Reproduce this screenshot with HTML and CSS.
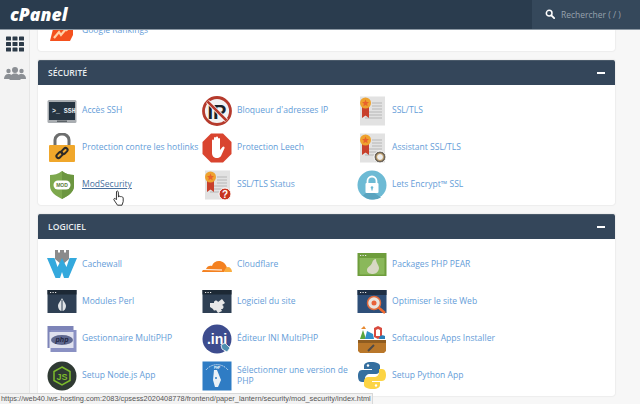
FILE: index.html
```html
<!DOCTYPE html>
<html lang="fr">
<head>
<meta charset="utf-8">
<title>cPanel</title>
<link rel="stylesheet" href="styles.css">
</head>
<body>
<header class="topbar">
  <span class="logo">cPanel</span>
  <div class="search">
    <svg class="search-icon" viewBox="0 0 12 12"><circle cx="5" cy="5" r="3.4" fill="none" stroke="#fff" stroke-width="1.8"/><path d="M7.6 7.6 11 11" stroke="#fff" stroke-width="2.2" stroke-linecap="round"/></svg>
    <span>Rechercher ( / )</span>
  </div>
</header>
<div class="shell">
  <nav class="side">
    <svg class="side-grid" viewBox="0 0 18 15"><g fill="#2c3a48"><rect width="5" height="4" rx=".6"/><rect x="6.500" width="5" height="4" rx=".6"/><rect x="13" width="5" height="4" rx=".6"/><rect y="5.500" width="5" height="4" rx=".6"/><rect x="6.500" y="5.500" width="5" height="4" rx=".6"/><rect x="13" y="5.500" width="5" height="4" rx=".6"/><rect y="11" width="5" height="4" rx=".6"/><rect x="6.500" y="11" width="5" height="4" rx=".6"/><rect x="13" y="11" width="5" height="4" rx=".6"/></g></svg>
    <svg class="side-users" viewBox="0 0 22 13"><g fill="#8b8f94"><circle cx="4.500" cy="4" r="2.200"/><circle cx="17.500" cy="4" r="2.200"/><path d="M0 12c0-3 1.500-5 4.500-5s4 2 4 5z"/><path d="M13.500 12c0-3 1-5 4-5s4.500 2 4.500 5z"/><circle cx="11" cy="3" r="3"/><path d="M5.500 13c0-4 2-6.500 5.500-6.500s5.500 2.500 5.500 6.500z"/></g></svg>
  </nav>
  <main class="main">
    <section class="panel panel-clipped">
      <div class="item item-clipped">
        <svg class="icon" viewBox="0 0 30 30"><path d="M7 10h19v10l-3 6H3z" fill="#f4511e"/><path d="M7 23l5-6 2 3 5-6 1 2" fill="none" stroke="#ffd2a8" stroke-width="2.200"/></svg>
        <a class="label">Google Rankings</a>
      </div>
    </section>

    <section class="panel">
      <h2 class="panel-head"><span>SÉCURITÉ</span><i class="minus"></i></h2>
      <div class="grid">
        <div class="item">
          <svg class="icon" viewBox="0 0 30 30"><rect x="0.500" y="4" width="29" height="23" rx="1.500" fill="#a9adb1"/><rect x="2" y="6" width="26" height="18" fill="#263441"/><rect x="10" y="24.500" width="10" height="1.500" fill="#5c6368"/><text x="5" y="17" class="svg-ssh">&gt;_ SSH</text></svg>
          <a class="label">Accès SSH</a>
        </div>
        <div class="item">
          <svg class="icon" viewBox="0 0 30 30"><circle cx="15" cy="15" r="13.500" fill="#f2f2f2" stroke="#b53a2c" stroke-width="2.800"/><text x="15" y="22.500" text-anchor="middle" class="svg-ip">IP</text><path d="M5.500 5.500 24.500 24.500" stroke="#fff" stroke-width="4"/><path d="M5.500 5.500 24.500 24.500" stroke="#b53a2c" stroke-width="2.500"/></svg>
          <a class="label">Bloqueur d'adresses IP</a>
        </div>
        <div class="item">
          <svg class="icon" viewBox="0 0 30 30"><use href="#cert"/></svg>
          <a class="label">SSL/TLS</a>
        </div>
        <div class="item">
          <svg class="icon" viewBox="0 0 30 30"><path d="M8 14V7a7 6 0 0 1 14 0v7" fill="none" stroke="#6d6e6e" stroke-width="3"/><rect x="2" y="12" width="26" height="17" rx="1" fill="#f0a72b"/><g fill="none" stroke="#2d2a26" stroke-width="2"><rect x="9" y="20" width="7" height="4" rx="2" transform="rotate(-45 12.500 22)"/><rect x="14" y="16" width="7" height="4" rx="2" transform="rotate(-45 17.500 18)"/></g></svg>
          <a class="label">Protection contre les hotlinks</a>
        </div>
        <div class="item">
          <svg class="icon" viewBox="0 0 30 30"><path d="M9 .5h12l8.500 8.500v12l-8.500 8.500H9L.5 21V9z" fill="#d9442f"/><path d="M10 15V7.500a1 1 0 0 1 2 0V14V5a1 1 0 0 1 2 0v9V4.500a1 1 0 0 1 2 0V14V6a1 1 0 0 1 2 0v11l2.500-3a1.200 1.200 0 0 1 2 1.300L19 23c-1 1.500-2.500 2-4 2-3 0-5-2-5-5z" fill="#fff"/></svg>
          <a class="label">Protection Leech</a>
        </div>
        <div class="item">
          <svg class="icon" viewBox="0 0 30 30"><use href="#cert"/><circle cx="23" cy="24" r="6" fill="#6d665c" stroke="#fff"/><circle cx="23" cy="24" r="3.500" fill="#eee" stroke="#c09a5e"/></svg>
          <a class="label">Assistant SSL/TLS</a>
        </div>
        <div class="item is-hover">
          <svg class="icon" viewBox="0 0 30 30"><path d="M15 1c4 3 8 4 12 4v11c0 6-6 10-12 13C9 26 3 22 3 16V5c4 0 8-1 12-4z" fill="#7da84d"/><path d="M15 1v28c6-3 12-7 12-13V5c-4 0-8-1-12-4z" fill="#6c9640"/><rect x="6.500" y="10.500" width="17" height="9" rx="4.500" fill="#fff"/><text x="15" y="17.200" text-anchor="middle" class="svg-mod">MOD</text></svg>
          <a class="label">ModSecurity</a>
        </div>
        <div class="item">
          <svg class="icon" viewBox="0 0 30 30"><use href="#cert"/><circle cx="23" cy="24" r="6" fill="#c8341f" stroke="#fff"/><text x="23" y="27.500" text-anchor="middle" class="svg-q">?</text></svg>
          <a class="label">SSL/TLS Status</a>
        </div>
        <div class="item">
          <svg class="icon" viewBox="0 0 30 30"><circle cx="15" cy="15" r="14.500" fill="#6dbad4"/><path d="M9 23 21 13v7l-2 2h-3l8 5.500A14.500 14.500 0 0 1 15 29.500c-4 0-7-2-9-4z" fill="#5aa4bf"/><path d="M10.500 14v-3a4.500 4.500 0 0 1 9 0v3" fill="none" stroke="#fff" stroke-width="1.800"/><rect x="8.500" y="13" width="13" height="10" rx="1" fill="#fff"/><circle cx="15" cy="17.500" r="1.300" fill="#6dbad4"/><rect x="14.400" y="17.500" width="1.200" height="3" fill="#6dbad4"/></svg>
          <a class="label">Lets Encrypt™ SSL</a>
        </div>
      </div>
    </section>

    <section class="panel panel-last">
      <h2 class="panel-head"><span>LOGICIEL</span><i class="minus"></i></h2>
      <div class="grid">
        <div class="item">
          <svg class="icon" viewBox="0 0 30 30"><path d="M8 0h3v2.500h2V0h4v2.500h2V0h3v9l-7 6-7-6z" fill="#8b8b8b"/><path d="M0 8h7.500l3 9 4.500-9 4.500 9 3-9H30l-8.500 20h-4.500l-2-6-2 6H8.500z" fill="#34a9dd"/></svg>
          <a class="label">Cachewall</a>
        </div>
        <div class="item">
          <svg class="icon" viewBox="0 0 30 30"><path d="M0 22c0-2 2-3 4-3 1-3 4-4 6-3 2-7 13-7 15 2l-3 4z" fill="#f48120"/><path d="M22 22c1-3 2-5 4-5 2 0 4 2 4 5z" fill="#faad3f"/><path d="M1 19.500l19 .5" stroke="#fff"/></svg>
          <a class="label">Cloudflare</a>
        </div>
        <div class="item">
          <svg class="icon" viewBox="0 0 30 30"><rect x="0.500" y="3" width="29" height="23" fill="#6e9d3c"/><rect x="2.500" y="8" width="25" height="16.500" fill="#8ab85a"/><path d="M19 9c0 4 3 6 3 9s-3 6-6 6-6-1-6-4 4-4 5-7 2-4 4-4z" fill="#d8d8c4"/><use href="#dots"/></svg>
          <a class="label">Packages PHP PEAR</a>
        </div>
        <div class="item">
          <svg class="icon" viewBox="0 0 30 30"><use href="#win"/><path d="M15 11c1 3 4 5 4 8s-2 5-4 5-4-2-4-5 3-5 4-8z" fill="#dfe3e6"/><path d="M15 13v11" stroke="#2f4054"/></svg>
          <a class="label">Modules Perl</a>
        </div>
        <div class="item">
          <svg class="icon" viewBox="0 0 30 30"><use href="#win"/><path d="M8 16h4a2 2 0 0 1 4-1l4-3 3 4-3 2a2 2 0 0 1-1 4l1 2-4 2-2-3a2 2 0 0 1-3-1l-3-2z" fill="#e8e8e8"/></svg>
          <a class="label">Logiciel du site</a>
        </div>
        <div class="item">
          <svg class="icon" viewBox="0 0 30 30"><rect x="0.500" y="3" width="29" height="23" fill="#2e4f79"/><rect x="0.500" y="3" width="29" height="5" fill="#1e2f45"/><use href="#dots"/><circle cx="17" cy="16" r="6.500" fill="#e9e4df" stroke="#e06a3c" stroke-width="1.500"/><circle cx="17" cy="16" r="2.500" fill="#e8623a"/><path d="M21.500 20.500 28 26" stroke="#f0692f" stroke-width="2.500"/></svg>
          <a class="label">Optimiser le site Web</a>
        </div>
        <div class="item">
          <svg class="icon" viewBox="0 0 30 30"><rect x="0.500" y="2" width="26" height="22" fill="#7d84b8"/><rect x="3.500" y="6" width="26" height="22" fill="#8a91c3"/><rect x="2.500" y="8" width="24" height="16" fill="#dfe1ee"/><ellipse cx="15" cy="16" rx="11" ry="5" fill="#5f688f"/><text x="15" y="18" text-anchor="middle" class="svg-php">php</text></svg>
          <a class="label">Gestionnaire MultiPHP</a>
        </div>
        <div class="item">
          <svg class="icon" viewBox="0 0 30 30"><circle cx="15" cy="15" r="14.500" fill="#3d4c8e"/><text x="15" y="20" text-anchor="middle" class="svg-ini">.ini</text><path d="M19 21l4-2 5 5-3 4-5-3z" fill="#4f8fb0" stroke="#fff" stroke-width=".8"/></svg>
          <a class="label">Éditeur INI MultiPHP</a>
        </div>
        <div class="item">
          <svg class="icon" viewBox="0 0 30 30"><path d="M1 16h28v11l-2 2H3l-2-2z" fill="#b9772a"/><path d="M1 16h28v3H1z" fill="#8f5c20"/><path d="M11 27l6-6" stroke="#4d4a4a" stroke-width="2"/><path d="M3 15l3-9 3 9z" fill="#5ba63e"/><path d="M8 15l2-8 6 3 1 5z" fill="#2f8fc9"/><path d="M17 13V4l4-2 4 2v9l-4 2z" fill="#d84b3f"/><path d="M19 12V6l2-1 2 1v6z" fill="#fff"/><path d="M22 15c0-3 3-5 6-3v3z" fill="#2a7fb8"/><path d="M4 5l3-3 2 3z" fill="#e8892f"/></svg>
          <a class="label">Softaculous Apps Installer</a>
        </div>
        <div class="item">
          <svg class="icon" viewBox="0 0 30 30"><circle cx="15" cy="15" r="14.500" fill="#2f3a33"/><path d="M15 6l8 4.500v9L15 24l-8-4.500v-9z" fill="none" stroke="#7cbb2c" stroke-width="1.500"/><text x="15" y="18.500" text-anchor="middle" class="svg-js">JS</text></svg>
          <a class="label">Setup Node.js App</a>
        </div>
        <div class="item">
          <svg class="icon" viewBox="0 0 30 30"><rect x="0.500" y="0.500" width="29" height="29" fill="#2f7cc4"/><path d="M4 9a14 14 0 0 1 22 0" fill="none" stroke="#fff" stroke-dasharray="1 1"/><text x="15" y="8" text-anchor="middle" class="svg-pver">PHP</text><path d="M12 9h3l4 10-3 7h-3l-2-7z" fill="#eaf1f7"/><circle cx="14" cy="17" r="1" fill="#2f7cc4"/></svg>
          <a class="label">Sélectionner une version de PHP</a>
        </div>
        <div class="item">
          <svg class="icon" viewBox="0 0 30 30"><path d="M14 1c-5 0-7 2-7 4v3h8v1H5c-3 0-4 3-4 6s1 6 4 6h3v-3c0-3 2-5 5-5h6c2 0 4-2 4-4V5c0-2-3-4-9-4z" fill="#356f9f"/><path d="M16 28c5 0 7-2 7-4v-3h-8v-1h10c3 0 4-3 4-6s-1-6-4-6h-3v3c0 3-2 5-5 5H11c-2 0-4 2-4 4v4c0 2 3 4 9 4z" fill="#fcd444"/><circle cx="11" cy="4.500" r="1.200" fill="#fff"/><circle cx="19" cy="24.500" r="1.200" fill="#fff"/></svg>
          <a class="label">Setup Python App</a>
        </div>
      </div>
    </section>
  </main>
</div>

<svg class="cursor" viewBox="0 0 12 17"><path d="M3.500 1.500c.8-.8 1.700-.4 1.800.6l.2 5 .6-.9c.6-.3 1.200-.1 1.400.4.600-.3 1.200-.1 1.400.5.700-.2 1.300.2 1.300 1v3.500l-1.200 3.600H4.500L1 10c-.6-1 .4-2 1.400-1.300l1 1z" fill="#fff" stroke="#222" stroke-width=".9" stroke-linejoin="round"/></svg>

<div class="statusbar">https://web40.lws-hosting.com:2083/cpsess2020408778/frontend/paper_lantern/security/mod_security/index.html</div>

<svg class="defs" width="0" height="0">
  <defs>
    <g id="cert">
      <rect x="3" y="0.500" width="25" height="29" fill="#e2e2e2"/>
      <path d="M15 7h10M15 10h10M15 13h10M12 16h13M8 19h17M8 22h17" stroke="#b5b5b5" stroke-width="1.200"/>
      <path d="M5 10v12l3.500-2.500L12 22V10z" fill="#c8402c"/>
      <circle cx="8.500" cy="7" r="5.500" fill="#eea22e"/>
      <path d="M8.500 3.500l1 2.400 2.500.2-1.900 1.600.6 2.500-2.200-1.300-2.200 1.300.6-2.500L5 6.100l2.500-.2z" fill="#e8622c"/>
    </g>
    <g id="dots"><path d="M3 5.500h1.200M5.500 5.500h1.200M8 5.500h1.200" stroke="#e6e6e6" stroke-width="1.200"/></g>
    <g id="win"><rect x="0.500" y="3" width="29" height="23" fill="#2f4054"/><rect x="0.500" y="3" width="29" height="4.500" fill="#1d2935"/><use href="#dots"/></g>
  </defs>
</svg>
</body>
</html>
```

FILE: styles.css
```css
* { box-sizing: border-box; }
html, body { margin: 0; height: 100%; }
body {
  width: 640px;
  height: 404px;
  overflow: hidden;
  background: #f7f7f7;
  font-family: "Open Sans", "Liberation Sans", sans-serif;
  font-size: 8.55px;
  display: flex;
  flex-direction: column;
  position: relative;
}
.topbar {
  height: 30px;
  flex: none;
  display: flex;
  justify-content: space-between;
  align-items: stretch;
  background: #2a3c4e;
  border-bottom: 1px solid #8c98a3;
  position: relative;
  z-index: 2;
}
.logo {
  padding: 4px 0 0 10px;
  color: #fff;
  font-family: "Open Sans", sans-serif;
  font-weight: 800;
  font-style: italic;
  font-size: 17.6px;
  line-height: 20px;
}
.search {
  width: 108px;
  display: flex;
  align-items: center;
  gap: 6px;
  padding: 0 0 1px 13px;
  background: #35485b;
  color: #97a2ad;
  font-size: 8.5px;
}
.search-icon { width: 10px; height: 10px; }
.shell {
  flex: 1;
  min-height: 0;
  display: flex;
}
.side {
  width: 30px;
  flex: none;
  background: #f3f3f3;
  border-right: 1px solid #e6e6e6;
  display: flex;
  flex-direction: column;
  align-items: center;
  padding-top: 6px;
  gap: 15px;
}
.side-grid { width: 18px; height: 16px; }
.side-users { width: 22px; height: 13px; }
.main {
  flex: 1;
  min-width: 0;
  padding: 0 25px 0 8px;
  overflow: hidden;
  display: flex;
  flex-direction: column;
  gap: 9px;
}
.panel {
  flex: none;
  background: #fff;
  border-radius: 0 0 3px 3px;
  box-shadow: 0 0 2px rgba(0, 0, 0, .14);
}
.panel-clipped {
  height: 21px;
  overflow: hidden;
  display: flex;
  align-items: flex-start;
  padding: 0 9px;
}
.item-clipped {
  margin-top: -15px;
}
.panel-head {
  height: 25px;
  margin: 0;
  padding: 0 10px;
  display: flex;
  align-items: center;
  justify-content: space-between;
  background: #34465a;
  border-top: 1px solid #4a5a6a;
  border-radius: 2px 2px 0 0;
  color: #e9edf0;
  font-size: 8.6px;
  font-weight: 600;
}
.minus {
  width: 8px;
  height: 2px;
  background: #fff;
}
.grid {
  display: grid;
  grid-template-columns: repeat(3, 155px);
  grid-auto-rows: 37px;
  padding: 7px 0 2px 9px;
  align-items: center;
}
.item {
  display: flex;
  align-items: center;
  gap: 5px;
  height: 30px;
}
.icon {
  width: 30px;
  height: 30px;
  flex: none;
}
.label {
  width: 118px;
  color: #659dd8;
  line-height: 11px;
}
.is-hover .label {
  color: #47709e;
  text-decoration: underline;
}
.cursor {
  position: absolute;
  left: 113px;
  top: 190px;
  width: 12px;
  height: 17px;
  z-index: 3;
}
.statusbar {
  position: absolute;
  left: 0;
  bottom: 0;
  width: 373px;
  height: 11px;
  padding-left: 1px;
  background: #f2f2f2;
  border: 1px solid #d8d8d8;
  border-width: 1px 1px 0 0;
  color: #555;
  font-family: "Liberation Sans", sans-serif;
  font-size: 7.4px;
  line-height: 10px;
  white-space: nowrap;
  z-index: 3;
}
.defs { position: absolute; }
.svg-ssh { font: bold 6.6px "Liberation Mono", monospace; fill: #e8ecef; }
.svg-ip { font: bold 20px "Liberation Sans", sans-serif; fill: #1a2126; }
.svg-q { font: bold 10px "Liberation Sans", sans-serif; fill: #fff; }
.svg-mod { font: bold 5px "Liberation Sans", sans-serif; fill: #5a7a3a; }
.svg-php { font: italic bold 7px "Liberation Sans", sans-serif; fill: #1e2440; }
.svg-ini { font: bold 14px "Liberation Sans", sans-serif; fill: #fff; }
.svg-js { font: bold 9px "Liberation Sans", sans-serif; fill: #7cbb2c; }
.svg-pver { font: bold 3px "Liberation Sans", sans-serif; fill: #fff; }
```
